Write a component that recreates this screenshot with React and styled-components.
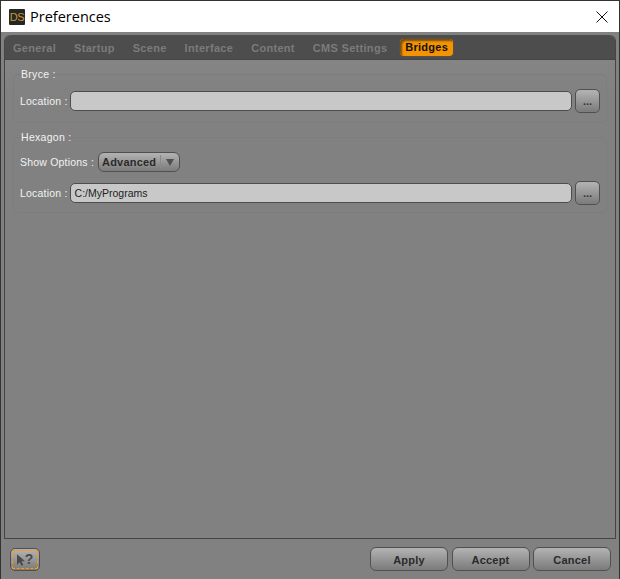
import React from "react";
import styled, { createGlobalStyle } from "styled-components";

const GlobalStyle = createGlobalStyle`
  html, body {
    margin: 0;
    padding: 0;
    background: #818181;
  }
`;

const tabs = ["General", "Startup", "Scene", "Interface", "Content", "CMS Settings"];

const App = () => {
  return (
    <Window>
      <GlobalStyle />
      <TitleBar>
        <AppIcon>DS</AppIcon>
        <Title>Preferences</Title>
        <CloseIcon width="12" height="12" viewBox="0 0 12 12">
          <path d="M.5.5l11 11M11.5.5l-11 11" stroke="#111" strokeWidth="1" fill="none" />
        </CloseIcon>
      </TitleBar>
      <Body>
        <Panel>
          <TabBar>
            {tabs.map((tab) => (
              <Tab key={tab}>{tab}</Tab>
            ))}
            <ActiveTab>Bridges</ActiveTab>
          </TabBar>
          <PanelContent>
            <Group $height={56}>
              <Legend>Bryce :</Legend>
              <Row>
                <RowLabel>Location :</RowLabel>
                <PathField />
                <BrowseButton>...</BrowseButton>
              </Row>
            </Group>
            <Group $height={83}>
              <Legend>Hexagon :</Legend>
              <OptionsRow>
                <RowLabel>Show Options :</RowLabel>
                <Dropdown>
                  <DropdownText>Advanced</DropdownText>
                  <DropdownArrow width="8" height="7" viewBox="0 0 8 7">
                    <path d="M0 0h8L4 7z" fill="#505050" />
                  </DropdownArrow>
                </Dropdown>
              </OptionsRow>
              <Row>
                <RowLabel>Location :</RowLabel>
                <PathField>C:/MyPrograms</PathField>
                <BrowseButton>...</BrowseButton>
              </Row>
            </Group>
          </PanelContent>
        </Panel>
        <Footer>
          <HelpButton>
            <HelpInner>
              <svg width="9" height="12" viewBox="0 0 10 13">
                <path d="M0 0v12l3-3 2 4 2-1-2-4h4z" fill="#4a4a4a" />
              </svg>
              <HelpMark>?</HelpMark>
            </HelpInner>
          </HelpButton>
          <Actions>
            <ActionButton>Apply</ActionButton>
            <ActionButton>Accept</ActionButton>
            <ActionButton>Cancel</ActionButton>
          </Actions>
        </Footer>
      </Body>
    </Window>
  );
};

const Window = styled.div`
  width: 620px;
  height: 579px;
  box-sizing: border-box;
  border: 1px solid #333333;
  border-bottom: none;
  display: flex;
  flex-direction: column;
  font-family: "Liberation Sans", Arial, sans-serif;
  overflow: hidden;
`;

const TitleBar = styled.div`
  height: 31px;
  flex-shrink: 0;
  background: #ffffff;
  display: flex;
  align-items: center;
  padding: 0 11px 0 8px;
`;

const AppIcon = styled.div`
  width: 16px;
  height: 16px;
  background: #262626;
  border-radius: 1px;
  color: #c89a2a;
  font-size: 11px;
  line-height: 16px;
  text-align: center;
  letter-spacing: -0.5px;
`;

const Title = styled.div`
  margin-left: 5px;
  font-family: "Open Sans", "Noto Sans", sans-serif;
  font-size: 14.5px;
  color: #000000;
`;

const CloseIcon = styled.svg`
  margin-left: auto;
`;

const Body = styled.div`
  flex: 1;
  background: #818181;
  display: flex;
  flex-direction: column;
  padding: 3px 3px 0;
  min-height: 0;
`;

const Panel = styled.div`
  height: 504px;
  box-sizing: border-box;
  border: 1px solid #454545;
  border-top: none;
  border-radius: 6px 6px 0 0;
  display: flex;
  flex-direction: column;
  background: linear-gradient(#878787, #818181 60px);
`;

const TabBar = styled.div`
  height: 25px;
  flex-shrink: 0;
  box-sizing: border-box;
  background: #4d4d4d;
  border-radius: 6px 6px 0 0;
  border-bottom: 1px solid #454545;
  display: flex;
  align-items: center;
  padding: 1px 0 0 8px;
  gap: 18px;
`;

const Tab = styled.div`
  font-size: 11px;
  font-weight: 700;
  letter-spacing: 0.3px;
  color: #7b7b7b;
`;

const ActiveTab = styled.div`
  margin-left: -5px;
  height: 17px;
  width: 53px;
  box-sizing: border-box;
  padding-left: 5px;
  background: #f59300;
  border-radius: 4px;
  box-shadow: inset 2px 2px 2px #7a4d10, 0 0 1px #a87a30;
  font-size: 11px;
  font-weight: 700;
  letter-spacing: 0.25px;
  line-height: 17px;
  color: #111111;
`;

const PanelContent = styled.div`
  padding: 0 8px;
  display: flex;
  flex-direction: column;
`;

const Group = styled.fieldset`
  box-sizing: border-box;
  height: ${(props) => props.$height}px;
  margin: 7px 0 0;
  padding: 0 6px;
  border: 1px solid #7d7d7d;
  border-radius: 5px;
  display: flex;
  flex-direction: column;
  gap: 9px;
  min-width: 0;
`;

const Legend = styled.legend`
  padding: 0;
  margin-left: 1px;
  margin-bottom: 8px;
  font-size: 10.5px;
  line-height: 14px;
  letter-spacing: 0.3px;
  color: #f2f2f2;
`;

const Row = styled.div`
  display: flex;
  align-items: center;
  height: 24px;
`;

const OptionsRow = styled(Row)`
  height: 20px;
`;

const RowLabel = styled.div`
  margin-right: 2px;
  font-size: 10.5px;
  letter-spacing: 0.2px;
  color: #f2f2f2;
  white-space: nowrap;
`;

const PathField = styled.div`
  flex: 1;
  height: 20px;
  box-sizing: border-box;
  margin-right: 3px;
  padding: 0 4px;
  background: #c8c8c8;
  border: 1px solid #4d4d4d;
  border-radius: 5px;
  font-size: 10.5px;
  line-height: 18px;
  color: #222222;
`;

const raised = `
  background: linear-gradient(#b4b4b4, #7a7a7a);
  border: 1px solid #505050;
  box-shadow: inset 0 0 1px #9a9a9a;
`;

const BrowseButton = styled.div`
  ${raised}
  width: 25px;
  height: 24px;
  box-sizing: border-box;
  border-radius: 5px;
  text-align: center;
  font-size: 11px;
  font-weight: 700;
  line-height: 22px;
  color: #333333;
`;

const Dropdown = styled.div`
  ${raised}
  height: 20px;
  width: 82px;
  margin-left: 2px;
  box-sizing: border-box;
  border-radius: 6px;
  display: flex;
  align-items: center;
  padding: 0 3px;
`;

const DropdownText = styled.span`
  font-size: 11px;
  font-weight: 700;
  letter-spacing: 0.2px;
  line-height: 14px;
  color: #2a2a2a;
  padding-right: 4px;
  border-right: 1px solid #8a8a8a;
`;

const DropdownArrow = styled.svg`
  margin-left: 5px;
`;

const Footer = styled.div`
  flex: 1;
  display: flex;
  align-items: flex-start;
  justify-content: space-between;
  padding: 8px 5px 0 6px;
`;

const HelpButton = styled.div`
  ${raised}
  width: 30px;
  height: 23px;
  margin-top: 1px;
  box-sizing: border-box;
  border-radius: 5px;
  padding: 1px;
`;

const HelpInner = styled.div`
  height: 100%;
  box-sizing: border-box;
  border: 1px dashed #ff9a00;
  display: flex;
  align-items: center;
  justify-content: center;
  gap: 1px;
`;

const HelpMark = styled.span`
  font-size: 14px;
  font-weight: 700;
  line-height: 14px;
  color: #4a4a4a;
  margin: -2px 0 0 -2px;
`;

const Actions = styled.div`
  display: flex;
  gap: 3.5px;
`;

const ActionButton = styled.div`
  ${raised}
  width: 78px;
  height: 24px;
  box-sizing: border-box;
  border-radius: 6px;
  text-align: center;
  font-size: 11px;
  font-weight: 700;
  letter-spacing: 0.2px;
  line-height: 24px;
  color: #2a2a2a;
`;

export default App;
